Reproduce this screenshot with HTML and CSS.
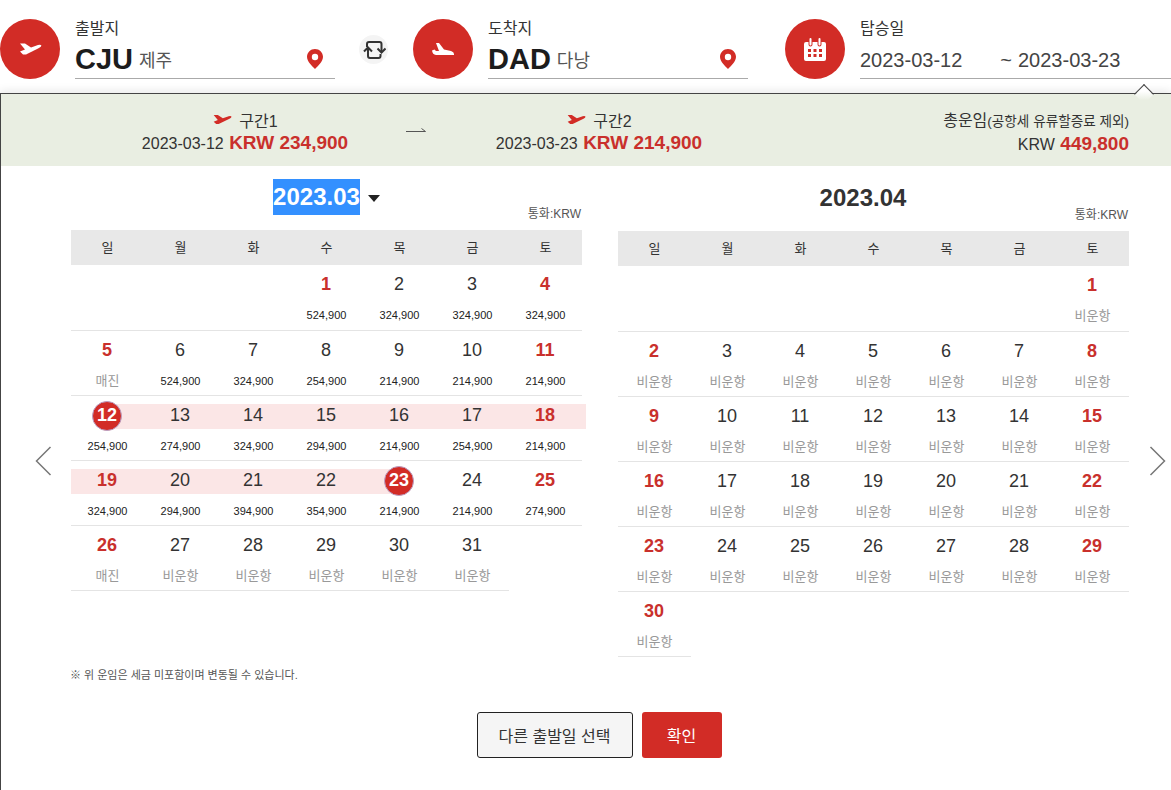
FILE: index.html
```html
<!DOCTYPE html>
<html lang="ko">
<head>
    <meta charset="UTF-8">
    <title>탑승일 선택</title>
    <link rel="stylesheet" href="styles.css">
</head>
<body>
    <!-- 출발지 / 도착지 / 탑승일 -->
    <div class="search-bar">
        <div class="field">
            <div class="field-icon">
                <svg width="24" height="14" viewBox="0 0 24 14"><path d="M2 1.5L7 1.5L13 5.5L20 3Q23 2.4 23.4 3.6Q23.4 5 21 6L8 12.4L5 12.4L2 9.6L7 7.6Z" fill="#fff"/></svg>
            </div>
            <div class="field-body">
                <div class="field-label">출발지</div>
                <div class="field-value">
                    <b class="code">CJU</b><span class="city">제주</span>
                    <svg class="pin" width="16" height="20" viewBox="0 0 16 20"><path d="M8 0C3.6 0 0 3.4 0 7.8C0 12.6 5 17 8 20C11 17 16 12.6 16 7.8C16 3.4 12.4 0 8 0Z" fill="#d22c26"/><circle cx="8" cy="8" r="3.2" fill="#fff"/></svg>
                </div>
            </div>
        </div>
        <div class="swap">
            <svg width="24" height="24" viewBox="0 0 24 24" fill="none" stroke="#333" stroke-width="2"><path d="M5 9V6Q5 4 7 4H17.5Q19.5 4 19.5 6V14"/><path d="M15.5 10.5L19.5 14.5L23.5 10.5"/><path d="M6 10V18Q6 20 8 20H16.5Q18.5 20 18.5 18V16"/><path d="M2 13.5L6 9.5L10 13.5"/></svg>
        </div>
        <div class="field">
            <div class="field-icon">
                <svg width="24" height="14" viewBox="0 0 24 14"><path d="M5 1L8 1L13 7.5L20 9Q23 10 23 12V13L5 13Q1.5 12.5 1 8.5L3.5 7.5L5 9L8 9Z" fill="#fff"/></svg>
            </div>
            <div class="field-body">
                <div class="field-label">도착지</div>
                <div class="field-value">
                    <b class="code">DAD</b><span class="city">다낭</span>
                    <svg class="pin" width="16" height="20" viewBox="0 0 16 20"><path d="M8 0C3.6 0 0 3.4 0 7.8C0 12.6 5 17 8 20C11 17 16 12.6 16 7.8C16 3.4 12.4 0 8 0Z" fill="#d22c26"/><circle cx="8" cy="8" r="3.2" fill="#fff"/></svg>
                </div>
            </div>
        </div>
        <div class="field field-date">
            <div class="field-icon">
                <svg width="22" height="23" viewBox="0 0 22 23"><path d="M2 4H4.5V6.5Q4.5 8.5 6.5 8.5Q8.5 8.5 8.5 6.5V4H13.5V6.5Q13.5 8.5 15.5 8.5Q17.5 8.5 17.5 6.5V4H20Q22 4 22 6V21Q22 23 20 23H2Q0 23 0 21V6Q0 4 2 4Z" fill="#fff"/><path d="M6.5 1V6.5M15.5 1V6.5" stroke="#fff" stroke-width="2" stroke-linecap="round"/><path d="M4 11h3v3H4zM9.5 11h3v3h-3zM15 11h3v3h-3zM4 16h3v3H4zM9.5 16h3v3h-3zM15 16h3v3h-3z" fill="#d22c26"/></svg>
            </div>
            <div class="field-body">
                <div class="field-label">탑승일</div>
                <div class="field-value dates">
                    <span class="date-from">2023-03-12</span><span class="date-tilde">~</span><span>2023-03-23</span>
                </div>
            </div>
        </div>
    </div>

    <div class="panel">
        <span class="notch"></span>

        <!-- 구간별 운임 -->
        <div class="summary">
            <div class="leg leg-first">
                <div class="leg-title">
                    <svg width="20" height="13" viewBox="0 0 24 14"><path d="M2 1.5L7 1.5L13 5.5L20 3Q23 2.4 23.4 3.6Q23.4 5 21 6L8 12.4L5 12.4L2 9.6L7 7.6Z" fill="#d22c26"/></svg>
                    구간1
                </div>
                <div class="leg-fare">2023-03-12 <b>KRW 234,900</b></div>
            </div>
            <svg class="leg-arrow" width="20" height="7" viewBox="0 0 20 7" fill="none" stroke="#555"><path d="M0 3.5H19.5L15.5 .5"/></svg>
            <div class="leg leg-second">
                <div class="leg-title">
                    <svg width="20" height="13" viewBox="0 0 24 14"><path d="M2 1.5L7 1.5L13 5.5L20 3Q23 2.4 23.4 3.6Q23.4 5 21 6L8 12.4L5 12.4L2 9.6L7 7.6Z" fill="#d22c26"/></svg>
                    구간2
                </div>
                <div class="leg-fare">2023-03-23 <b>KRW 214,900</b></div>
            </div>
            <div class="total">
                <div class="total-title">총운임<small>(공항세 유류할증료 제외)</small></div>
                <div class="leg-fare">KRW <b>449,800</b></div>
            </div>
        </div>

        <svg class="nav nav-prev" width="17" height="30" viewBox="0 0 17 30" fill="none" stroke="#777" stroke-width="1.5"><path d="M15.5 1L1.5 15L15.5 29"/></svg>
        <svg class="nav nav-next" width="17" height="30" viewBox="0 0 17 30" fill="none" stroke="#777" stroke-width="1.5"><path d="M1.5 1L15.5 15L1.5 29"/></svg>

        <div class="content">
            <div class="calendars">
                <!-- 3월 -->
                <div class="calendar">
                    <div class="month-title"><span class="month-selected">2023.03</span><i class="month-arrow"></i></div>
                    <div class="currency">통화:KRW</div>
                    <div class="week-head"><span>일</span><span>월</span><span>화</span><span>수</span><span>목</span><span>금</span><span>토</span></div>
                    <div class="days">
                        <div class="day"></div><div class="day"></div><div class="day"></div>
                        <div class="day red"><div class="num">1</div><div class="price">524,900</div></div>
                        <div class="day"><div class="num">2</div><div class="price">324,900</div></div>
                        <div class="day"><div class="num">3</div><div class="price">324,900</div></div>
                        <div class="day red"><div class="num">4</div><div class="price">324,900</div></div>

                        <div class="day red"><div class="num">5</div><div class="price none">매진</div></div>
                        <div class="day"><div class="num">6</div><div class="price">524,900</div></div>
                        <div class="day"><div class="num">7</div><div class="price">324,900</div></div>
                        <div class="day"><div class="num">8</div><div class="price">254,900</div></div>
                        <div class="day"><div class="num">9</div><div class="price">214,900</div></div>
                        <div class="day"><div class="num">10</div><div class="price">214,900</div></div>
                        <div class="day red"><div class="num">11</div><div class="price">214,900</div></div>

                        <div class="day"><div class="num range-start"><span class="picked">12</span></div><div class="price">254,900</div></div>
                        <div class="day"><div class="num range">13</div><div class="price">274,900</div></div>
                        <div class="day"><div class="num range">14</div><div class="price">324,900</div></div>
                        <div class="day"><div class="num range">15</div><div class="price">294,900</div></div>
                        <div class="day"><div class="num range">16</div><div class="price">214,900</div></div>
                        <div class="day"><div class="num range">17</div><div class="price">254,900</div></div>
                        <div class="day red"><div class="num range range-tail">18</div><div class="price">214,900</div></div>

                        <div class="day red"><div class="num range">19</div><div class="price">324,900</div></div>
                        <div class="day"><div class="num range">20</div><div class="price">294,900</div></div>
                        <div class="day"><div class="num range">21</div><div class="price">394,900</div></div>
                        <div class="day"><div class="num range">22</div><div class="price">354,900</div></div>
                        <div class="day"><div class="num range-end"><span class="picked">23</span></div><div class="price">214,900</div></div>
                        <div class="day"><div class="num">24</div><div class="price">214,900</div></div>
                        <div class="day red"><div class="num">25</div><div class="price">274,900</div></div>

                        <div class="day red"><div class="num">26</div><div class="price none">매진</div></div>
                        <div class="day"><div class="num">27</div><div class="price none">비운항</div></div>
                        <div class="day"><div class="num">28</div><div class="price none">비운항</div></div>
                        <div class="day"><div class="num">29</div><div class="price none">비운항</div></div>
                        <div class="day"><div class="num">30</div><div class="price none">비운항</div></div>
                        <div class="day"><div class="num">31</div><div class="price none">비운항</div></div>
                    </div>
                </div>

                <!-- 4월 -->
                <div class="calendar calendar-next">
                    <div class="month-title"><span class="month-plain">2023.04</span></div>
                    <div class="currency">통화:KRW</div>
                    <div class="week-head"><span>일</span><span>월</span><span>화</span><span>수</span><span>목</span><span>금</span><span>토</span></div>
                    <div class="days">
                        <div class="day"></div><div class="day"></div><div class="day"></div><div class="day"></div><div class="day"></div><div class="day"></div>
                        <div class="day red"><div class="num">1</div><div class="price none">비운항</div></div>

                        <div class="day red"><div class="num">2</div><div class="price none">비운항</div></div>
                        <div class="day"><div class="num">3</div><div class="price none">비운항</div></div>
                        <div class="day"><div class="num">4</div><div class="price none">비운항</div></div>
                        <div class="day"><div class="num">5</div><div class="price none">비운항</div></div>
                        <div class="day"><div class="num">6</div><div class="price none">비운항</div></div>
                        <div class="day"><div class="num">7</div><div class="price none">비운항</div></div>
                        <div class="day red"><div class="num">8</div><div class="price none">비운항</div></div>

                        <div class="day red"><div class="num">9</div><div class="price none">비운항</div></div>
                        <div class="day"><div class="num">10</div><div class="price none">비운항</div></div>
                        <div class="day"><div class="num">11</div><div class="price none">비운항</div></div>
                        <div class="day"><div class="num">12</div><div class="price none">비운항</div></div>
                        <div class="day"><div class="num">13</div><div class="price none">비운항</div></div>
                        <div class="day"><div class="num">14</div><div class="price none">비운항</div></div>
                        <div class="day red"><div class="num">15</div><div class="price none">비운항</div></div>

                        <div class="day red"><div class="num">16</div><div class="price none">비운항</div></div>
                        <div class="day"><div class="num">17</div><div class="price none">비운항</div></div>
                        <div class="day"><div class="num">18</div><div class="price none">비운항</div></div>
                        <div class="day"><div class="num">19</div><div class="price none">비운항</div></div>
                        <div class="day"><div class="num">20</div><div class="price none">비운항</div></div>
                        <div class="day"><div class="num">21</div><div class="price none">비운항</div></div>
                        <div class="day red"><div class="num">22</div><div class="price none">비운항</div></div>

                        <div class="day red"><div class="num">23</div><div class="price none">비운항</div></div>
                        <div class="day"><div class="num">24</div><div class="price none">비운항</div></div>
                        <div class="day"><div class="num">25</div><div class="price none">비운항</div></div>
                        <div class="day"><div class="num">26</div><div class="price none">비운항</div></div>
                        <div class="day"><div class="num">27</div><div class="price none">비운항</div></div>
                        <div class="day"><div class="num">28</div><div class="price none">비운항</div></div>
                        <div class="day red"><div class="num">29</div><div class="price none">비운항</div></div>

                        <div class="day red"><div class="num">30</div><div class="price none">비운항</div></div>
                    </div>
                </div>
            </div>

            <p class="note">※ 위 운임은 세금 미포함이며 변동될 수 있습니다.</p>

            <div class="buttons">
                <button class="btn btn-other">다른 출발일 선택</button>
                <button class="btn btn-ok">확인</button>
            </div>
        </div>
    </div>
</body>
</html>
```

FILE: styles.css
```css
* {
    box-sizing: border-box;
}

html, body {
    margin: 0;
    height: 790px;
    overflow: hidden;
}

body {
    background: #fff;
    color: #333;
    font-family: "Liberation Sans", "Noto Sans CJK KR", sans-serif;
}

/* 상단 검색 영역 */
.search-bar {
    display: flex;
    height: 93px;
    padding-top: 19px;
}

.field {
    display: flex;
    gap: 15px;
    width: 335px;
}

.field-date {
    width: 386px;
    margin-left: 37px;
}

.field-icon {
    display: flex;
    flex: none;
    align-items: center;
    justify-content: center;
    width: 60px;
    height: 60px;
    background: #d22c26;
    border-radius: 50%;
}

.field-body {
    flex: 1;
    height: 60px;
}

.field-label {
    height: 21px;
    font-size: 16px;
    line-height: 19px;
}

.field-value {
    position: relative;
    display: flex;
    align-items: center;
    height: 39px;
    border-bottom: 1px solid #aaa;
}

.code {
    color: #1c1c1c;
    font-size: 29px;
    line-height: 34px;
}

.city {
    margin-left: 6px;
    color: #555;
    font-size: 18px;
}

.pin {
    position: absolute;
    top: 9px;
    right: 12px;
}

.dates {
    padding-top: 2px;
    color: #444;
    font-size: 20px;
}

.date-from {
    margin-right: 38px;
}

.date-tilde {
    margin-right: 6px;
}

.swap {
    display: flex;
    flex: none;
    align-items: center;
    justify-content: center;
    width: 29px;
    height: 29px;
    margin: 16px 25px 0 24px;
    background: #f4f4f4;
    border-radius: 50%;
}

/* 달력 패널 */
.panel {
    position: relative;
    height: 697px;
    background: #fff;
    border-top: 1px solid #444;
    border-left: 1px solid #444;
    box-shadow: 0 -3px 8px rgba(0, 0, 0, .08);
}

.notch {
    position: absolute;
    top: -7px;
    right: 20px;
    width: 14px;
    height: 14px;
    background: linear-gradient(135deg, #fff 30%, #e9eee2 80%);
    border-top: 1px solid #444;
    border-left: 1px solid #444;
    transform: rotate(45deg);
}

.summary {
    display: flex;
    align-items: flex-start;
    height: 72px;
    padding: 14px 42px 0 83px;
    background: #e9eee2;
}

.leg {
    text-align: center;
}

.leg-first {
    width: 322px;
}

.leg-second {
    width: 346px;
}

.leg-arrow {
    flex: none;
    margin-top: 20px;
}

.leg-title {
    display: flex;
    align-items: center;
    justify-content: center;
    gap: 7px;
    height: 23px;
    font-size: 16px;
}

.leg-fare {
    font-size: 16px;
    line-height: 23px;
}

.leg-fare b {
    margin-left: 1px;
    color: #c9302c;
    font-size: 19px;
}

.total {
    flex: 1;
    padding-top: 1px;
    text-align: right;
}

.total-title {
    height: 23px;
    font-size: 16px;
    line-height: 23px;
}

.total-title small {
    font-size: 13.6px;
}

.nav {
    position: absolute;
    top: 352px;
}

.nav-prev {
    left: 34px;
}

.nav-next {
    right: 5px;
}

.content {
    width: 1058px;
    margin-left: 70px;
}

.calendars {
    display: flex;
    gap: 36px;
    align-items: flex-start;
}

.calendar {
    width: 511px;
    padding-top: 13px;
}

.calendar-next {
    padding-top: 14px;
}

.month-title {
    display: flex;
    align-items: center;
    justify-content: center;
    height: 36px;
    padding-right: 21px;
    color: #333;
    font-size: 24px;
    font-weight: bold;
}

.month-selected {
    background: #3390ff;
    color: #fff;
    line-height: 36px;
}

.month-arrow {
    width: 0;
    height: 0;
    margin: 2px -21px 0 8px;
    border-top: 7px solid #222;
    border-right: 6.5px solid transparent;
    border-left: 6.5px solid transparent;
}

.currency {
    height: 16px;
    margin: -9px 0 8px;
    padding-right: 1px;
    color: #555;
    font-size: 12px;
    line-height: 16px;
    text-align: right;
}

.week-head {
    display: grid;
    grid-template-columns: repeat(7, 73px);
    height: 35px;
    background: #e8e8e8;
    font-size: 13px;
    line-height: 35px;
    text-align: center;
}

.days {
    display: grid;
    grid-template-columns: repeat(7, 73px);
    grid-template-rows: 66px;
    grid-auto-rows: 65px;
}

.day {
    border-bottom: 1px solid #e4e4e4;
    text-align: center;
}

.num {
    display: flex;
    justify-content: center;
    height: 25px;
    margin-top: 8px;
    padding-right: 1px;
    color: #333;
    font-size: 18px;
    line-height: 23px;
}

.red .num {
    color: #c9302c;
    font-weight: bold;
}

.range {
    background: #fbe6e6;
}

.range-tail {
    margin-right: -4px;
    padding-right: 5px;
}

.range-start {
    background: linear-gradient(to right, transparent 50%, #fbe6e6 50%);
}

.range-end {
    background: linear-gradient(to right, #fbe6e6 50%, transparent 50%);
}

.picked {
    flex: none;
    width: 30px;
    height: 30px;
    margin-top: -3px;
    background: #d22c26;
    border: 1px solid #b9a0c4;
    border-radius: 50%;
    color: #fff;
    font-weight: bold;
    line-height: 26px;
}

.price {
    margin-top: 9px;
    color: #222;
    font-size: 11px;
    line-height: 16px;
}

.price.none {
    color: #999;
    font-size: 13px;
}

.note {
    margin: 10px 0 29px -1px;
    color: #555;
    font-size: 11px;
    line-height: 16px;
}

.buttons {
    display: flex;
    gap: 9px;
    justify-content: center;
    padding-right: 2px;
}

.btn {
    height: 46px;
    border-radius: 3px;
    font-family: inherit;
    font-size: 16px;
}

.btn-other {
    width: 156px;
    background: #f5f5f5;
    border: 1px solid #222;
    color: #333;
}

.btn-ok {
    width: 80px;
    background: #d22c26;
    border: 0;
    color: #fff;
}
```
